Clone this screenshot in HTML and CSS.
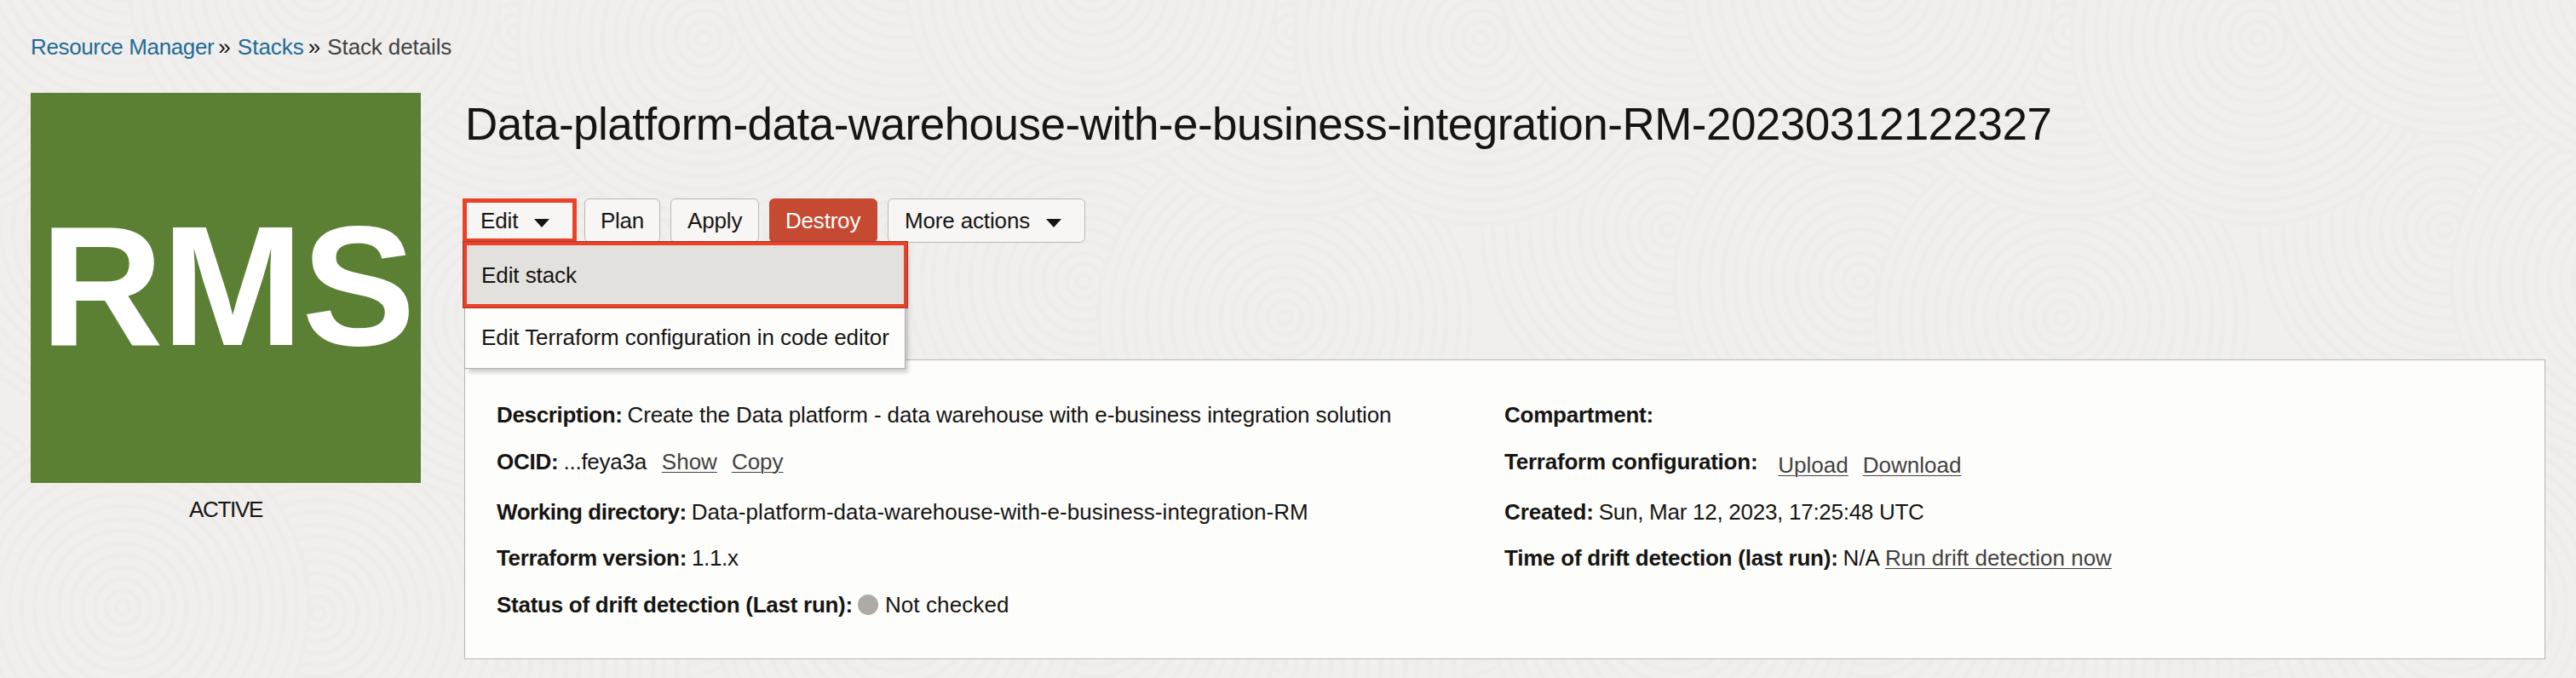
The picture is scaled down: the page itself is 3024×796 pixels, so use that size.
FILE: index.html
```html
<!DOCTYPE html>
<html lang="en">
<head>
<meta charset="utf-8">
<title>Stack details</title>
<link rel="stylesheet" href="styles.css">
</head>
<body>
<svg class="texture" viewBox="0 0 3024 796" aria-hidden="true">
  <defs>
    <g id="whorl" class="whorl">
      <circle r="218"/><circle r="205"/><circle r="190"/><circle r="177"/><circle r="162"/><circle r="148"/><circle r="133"/><circle r="119"/><circle r="104"/><circle r="90"/><circle r="75"/><circle r="61"/><circle r="47"/><circle r="33"/><circle r="20"/><circle r="8"/>
    </g>
    <g id="tile">
      <use href="#whorl" x="800" y="690"/>
      <use href="#whorl" x="590" y="780"/>
      <use href="#whorl" x="373" y="720"/>
      <use href="#whorl" x="144" y="713"/>
      <use href="#whorl" x="360" y="330"/>
      <use href="#whorl" x="596" y="373"/>
      <use href="#whorl" x="1046" y="270"/>
      <use href="#whorl" x="605" y="37"/>
      <use href="#whorl" x="146" y="-60"/>
      <use href="#whorl" x="370" y="-20"/>
      <use href="#whorl" x="826" y="45"/>
    </g>
  </defs>
  <use href="#tile" x="-912"/><use href="#tile"/><use href="#tile" x="912"/><use href="#tile" x="1824"/><use href="#tile" x="2736"/>
</svg>
<div class="page">
  <nav class="breadcrumb">
    <a class="crumb crumb-service" href="#">Resource Manager</a><span class="sep">»</span><a class="crumb" href="#">Stacks</a><span class="sep">»</span><span class="current">Stack details</span>
  </nav>
  <main class="main">
    <aside class="side">
      <div class="badge">RMS</div>
      <div class="state">ACTIVE</div>
    </aside>
    <section class="content">
      <h1 class="title">Data-platform-data-warehouse-with-e-business-integration-RM-20230312122327</h1>
      <div class="actions">
        <div class="edit">
          <button class="btn btn-edit">Edit<svg class="caret" viewBox="0 0 18 10"><path d="M0 0H18L9 10Z"/></svg></button>
          <div class="menu">
            <div class="item item-active">Edit stack</div>
            <div class="item">Edit Terraform configuration in code editor</div>
          </div>
          <span class="mark mark-button"></span>
          <span class="mark mark-item"></span>
        </div>
        <button class="btn btn-plan">Plan</button>
        <button class="btn btn-apply">Apply</button>
        <button class="btn btn-destroy">Destroy</button>
        <button class="btn btn-more">More actions<svg class="caret" viewBox="0 0 18 10"><path d="M0 0H18L9 10Z"/></svg></button>
      </div>
      <div class="panel">
        <dl class="col">
          <div class="row"><dt class="t-wide">Description:</dt><dd class="t-desc">Create the Data platform - data warehouse with e-business integration solution</dd></div>
          <div class="row row-tall"><dt>OCID:</dt><dd class="t-ocid">...feya3a</dd><a class="link link-show" href="#">Show</a><a class="link link-next" href="#">Copy</a></div>
          <div class="row"><dt class="t-work">Working directory:</dt><dd class="t-dir">Data-platform-data-warehouse-with-e-business-integration-RM</dd></div>
          <div class="row"><dt class="t-wide">Terraform version:</dt><dd class="t-ver">1.1.x</dd></div>
          <div class="row"><dt class="t-status">Status of drift detection (Last run):</dt><dd class="status"><span class="dot"></span>Not checked</dd></div>
        </dl>
        <dl class="col">
          <div class="row"><dt>Compartment:</dt></div>
          <div class="row row-tall"><dt>Terraform configuration:</dt><dd class="files"><a class="link" href="#">Upload</a><a class="link link-next" href="#">Download</a></dd></div>
          <div class="row"><dt class="t-created">Created:</dt><dd class="t-date">Sun, Mar 12, 2023, 17:25:48 UTC</dd></div>
          <div class="row"><dt>Time of drift detection (last run):</dt><dd>N/A</dd><a class="link" href="#">Run drift detection now</a></div>
        </dl>
      </div>
    </section>
  </main>
</div>
</body>
</html>
```
FILE: styles.css
```css
* { box-sizing: border-box; }
body {
  margin: 0;
  height: 796px;
  overflow: hidden;
  background: #f0efed;
  color: #161513;
  font: 26px/30px "Liberation Sans", Arial, sans-serif;
}
.texture { position: absolute; inset: 0; width: 3024px; height: 796px; z-index: -1; }
.whorl circle { fill: #f0efed; stroke: #edecea; stroke-width: 5; }

.page { padding: 40px 36px 0; }
.breadcrumb { display: flex; margin: 0 0 39px; }
.crumb { color: #226b95; text-decoration: none; }
.crumb-service { letter-spacing: -.36px; }
.sep { margin: 0 8px 0 5px; }
.current { color: #43413f; letter-spacing: -.12px; }

.main { display: flex; gap: 51px; }
.side { width: 458px; text-align: center; }
.badge {
  height: 458px;
  padding-left: 3px;
  background: #5b8034;
  color: #fff;
  font-size: 200px;
  font-weight: bold;
  line-height: 454px;
  letter-spacing: -2px;
}
.state { margin-top: 16px; letter-spacing: -1.3px; }

.content { width: 2443px; padding-top: 7px; }
.title { margin: 0 0 57px 1px; font-size: 53px; font-weight: normal; line-height: 60px; letter-spacing: -.51px; white-space: nowrap; }

.actions { display: flex; gap: 12px; height: 52px; }
.edit { position: relative; }
.btn {
  display: flex;
  align-items: center;
  height: 52px;
  padding: 0 0 0 18px;
  border: 1px solid #b9b7b4;
  border-radius: 6px;
  background: #f7f6f5;
  color: #161513;
  font: inherit;
  letter-spacing: -.15px;
  white-space: nowrap;
}
.btn-edit { width: 129px; }
.btn-plan { width: 89px; letter-spacing: -.3px; }
.btn-apply { width: 104px; padding-left: 19px; }
.btn-destroy { width: 127px; padding-left: 18px; background: #c54a31; border-color: #c54a31; color: #fff; letter-spacing: -.2px; }
.btn-more { width: 232px; padding-left: 19px; }
.caret { width: 18px; height: 10px; margin: 5px 0 0 19px; fill: #161513; }

.menu {
  position: absolute;
  z-index: 1;
  top: 50px;
  left: 0;
  width: 518px;
  height: 150px;
  border: 1px solid #b3b1ae;
  background: #fdfdfb;
  box-shadow: 4px 5px 5px -1px rgba(0, 0, 0, .2);
}
.item { height: 68px; padding-left: 19px; line-height: 69px; letter-spacing: -.08px; white-space: nowrap; }
.item-active { height: 78px; line-height: 78px; background: #e2e1dd; }
.mark { position: absolute; z-index: 2; left: -2px; border: 5px solid #ec4127; }
.mark-button { top: 0; width: 134px; height: 52px; }
.mark-item { top: 50px; width: 523px; height: 79px; outline: 1px solid rgba(60, 50, 65, .5); outline-offset: -1px; }

.panel {
  display: grid;
  grid-template-columns: 1183px 1fr;
  height: 352px;
  margin-top: 137px;
  padding: 49px 0 0 37px;
  border: 1px solid #b9b7b4;
  background: #fdfdfb;
}
.col { margin: 0; }
.row { display: flex; gap: 6px; height: 54.7px; white-space: nowrap; }
.row-tall { height: 59px; }
dt { font-weight: bold; letter-spacing: -.23px; }
dd { margin: 0; }
.t-wide { letter-spacing: -.35px; }
.t-work { letter-spacing: -.44px; }
.t-status { letter-spacing: -.26px; }
.t-created { letter-spacing: -.09px; }
.t-desc { letter-spacing: -.1px; }
.t-ocid, .t-date { letter-spacing: -.27px; }
.t-dir { letter-spacing: .05px; }
.t-ver { letter-spacing: -.34px; }
.status { display: flex; gap: 8px; letter-spacing: .1px; }
.dot { width: 24px; height: 24px; margin-top: 3px; border-radius: 50%; background: #aeaaa5; }
.link { color: #43413f; text-decoration: underline 1px; text-underline-offset: 3px; }
.link-show { margin-left: 12px; }
.link-next { margin-left: 11px; }
.files { display: flex; gap: 6px; margin: 4px 0 0 18px; }
```
